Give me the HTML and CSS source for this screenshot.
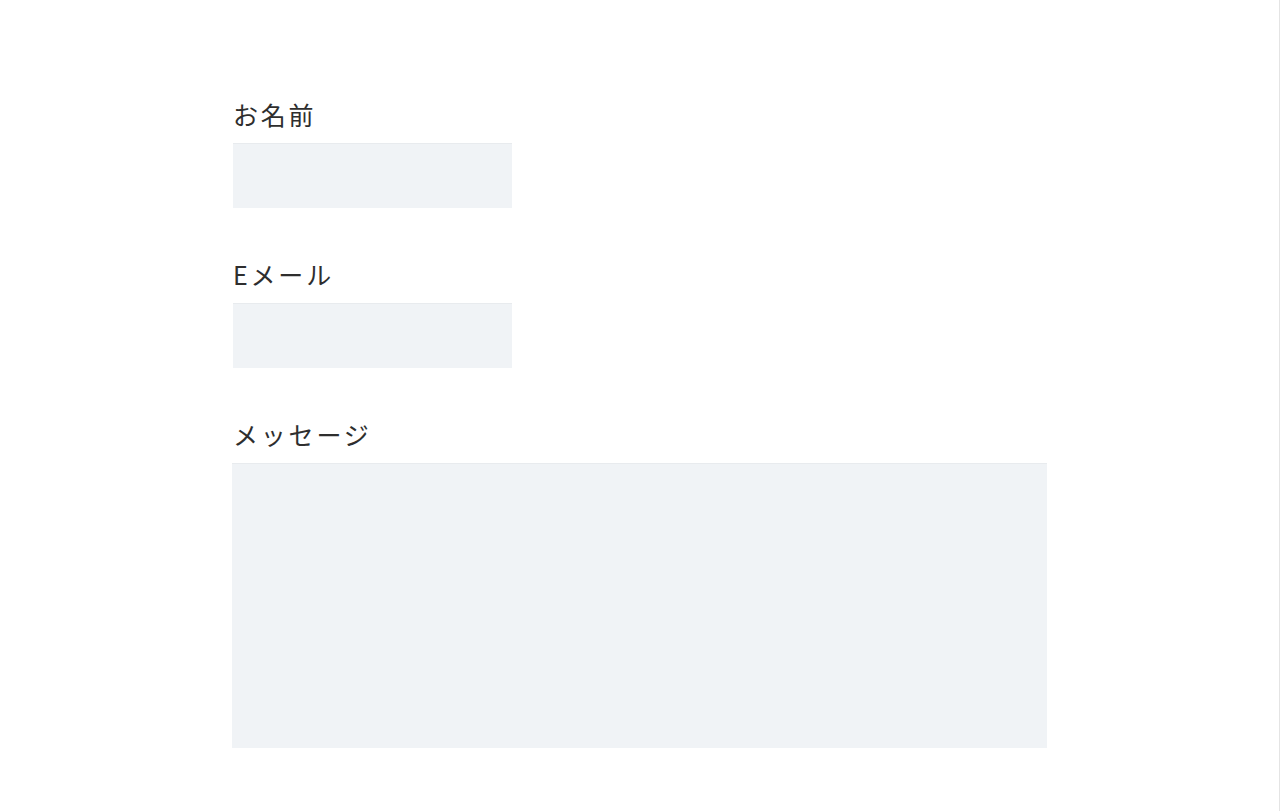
FILE: index.html
```html
<!DOCTYPE html>
<html lang="ja">
<head>
<meta charset="utf-8">
<link rel="stylesheet" href="styles.css">
</head>
<body>
<div class="page">
  <form class="form">
    <div class="field">
      <label class="label">お名前</label>
      <input class="input" type="text">
    </div>
    <div class="field">
      <label class="label">Eメール</label>
      <input class="input" type="email">
    </div>
    <div class="field">
      <label class="label">メッセージ</label>
      <textarea class="textarea"></textarea>
    </div>
  </form>
</div>
</body>
</html>
```
FILE: styles.css
```css
html, body {
  margin: 0;
  padding: 0;
  background: #ffffff;
}
.page {
  box-sizing: border-box;
  min-height: 811px;
  width: 1280px;
  border-right: 1px solid #e4e4e4;
  padding-top: 96px;
  padding-left: 232px;
}
.form {
  display: flex;
  flex-direction: column;
  gap: 48px;
}
.field {
  display: flex;
  flex-direction: column;
  align-items: flex-start;
}
.label {
  font-family: "Noto Sans CJK JP", "Noto Sans", sans-serif;
  font-size: 25px;
  line-height: 36px;
  letter-spacing: 2.8px;
  color: #2e2e2e;
  font-weight: 400;
  margin-bottom: 11px;
  padding-left: 1px;
}
.input {
  box-sizing: border-box;
  width: 279px;
  height: 65px;
  margin-left: 1px;
  border: none;
  border-top: 1px solid #e8ebee;
  background: #f0f3f6;
  padding: 0;
}
.textarea {
  box-sizing: border-box;
  width: 815px;
  height: 285px;
  border: none;
  border-top: 1px solid #e8ebee;
  background: #f0f3f6;
  padding: 0;
  resize: none;
}
```
